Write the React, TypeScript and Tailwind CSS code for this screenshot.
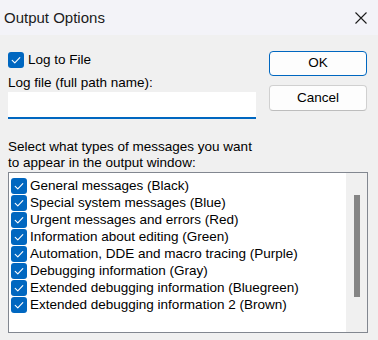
import React from "react";

const Check = () => (
  <svg width="16" height="16" viewBox="0 0 16 16" className="shrink-0 block">
    <rect x="0" y="0" width="16" height="16" rx="3" fill="#0067c0" />
    <path d="M4.2 8.3 L6.8 10.9 L11.8 5.6" fill="none" stroke="#fff" strokeWidth="1.1" strokeLinecap="round" strokeLinejoin="round" />
  </svg>
);

const items = [
  "General messages (Black)",
  "Special system messages (Blue)",
  "Urgent messages and errors (Red)",
  "Information about editing (Green)",
  "Automation, DDE and macro tracing (Purple)",
  "Debugging information (Gray)",
  "Extended debugging information (Bluegreen)",
  "Extended debugging information 2 (Brown)",
];

export default function App() {
  return (
    <div
      className="w-[378px] h-[340px] bg-[#f0f0f0] text-[#000] flex flex-col overflow-hidden"
      style={{ fontFamily: '"Liberation Sans", Arial, sans-serif' }}
    >
      <div className="h-[35px] bg-[#f3f3f8] flex items-center justify-between pl-[4px] pr-[11px] shrink-0">
        <span className="text-[15px] text-[#1b1b1b] leading-none">Output Options</span>
        <svg width="12" height="12" viewBox="0 0 12 12">
          <path d="M0.5 0.5 L11.5 11.5 M11.5 0.5 L0.5 11.5" stroke="#1b1b1b" strokeWidth="1.1" />
        </svg>
      </div>
      <div className="flex flex-col px-[8px] text-[13.5px]">
        <div className="flex">
          <div className="flex flex-col w-[248px]">
            <div className="flex items-center gap-[4px] mt-[17px] h-[16px]">
              <Check />
              <span className="leading-none">Log to File</span>
            </div>
            <div className="mt-[7px] h-[16px] leading-[16px]">Log file (full path name):</div>
            <div className="mt-[1px] h-[27px] bg-white border-b-2 border-[#0067c0]"></div>
          </div>
          <div className="flex flex-col ml-[13px] w-[98px] mt-[16px] gap-[9px]">
            <div className="h-[25px] bg-[#fdfdfd] border border-[#0067c0] rounded-[4px] flex items-center justify-center">OK</div>
            <div className="h-[26px] bg-[#fdfdfd] border border-[#d0d0d0] border-b-[#bdbdbd] rounded-[4px] flex items-center justify-center">Cancel</div>
          </div>
        </div>
        <div className="mt-[20px] leading-[16px]">
          <div>Select what types of messages you want</div>
          <div>to appear in the output window:</div>
        </div>
        <div className="mt-[1px] h-[161px] w-[360px] bg-white border border-[#828790] flex">
          <div className="flex-1 flex flex-col pl-[2px] pt-[4px]">
            {items.map((t) => (
              <div key={t} className="h-[17px] flex items-center gap-[3px]">
                <Check />
                <span className="leading-none whitespace-nowrap">{t}</span>
              </div>
            ))}
          </div>
          <div className="w-[21px] bg-[#f0f0f0] flex justify-center pt-[22px]">
            <div className="w-[6px] h-[102px] bg-[#858585]"></div>
          </div>
        </div>
      </div>
    </div>
  );
}
